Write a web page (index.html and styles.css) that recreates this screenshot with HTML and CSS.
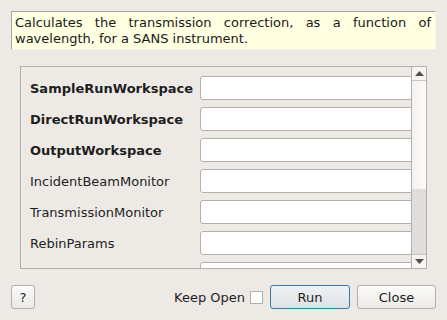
FILE: index.html
```html
<!DOCTYPE html>
<html>
<head>
<meta charset="utf-8">
<link rel="stylesheet" href="styles.css">
</head>
<body>
<div class="dialog">
  <div class="desc">Calculates the transmission correction, as a function of wavelength, for a SANS instrument.</div>
  <div class="panel">
    <div class="content">
      <div class="grid">
        <label class="lbl bold">SampleRunWorkspace</label><div class="field"></div>
        <label class="lbl bold">DirectRunWorkspace</label><div class="field"></div>
        <label class="lbl bold">OutputWorkspace</label><div class="field"></div>
        <label class="lbl">IncidentBeamMonitor</label><div class="field"></div>
        <label class="lbl">TransmissionMonitor</label><div class="field"></div>
        <label class="lbl">RebinParams</label><div class="field"></div>
        <span class="lbl"></span><div class="field"></div>
      </div>
    </div>
    <div class="scrollbar">
      <div class="sb-btn up"><svg width="9" height="5" viewBox="0 0 9 5"><polygon points="0,5 9,5 4.5,0" fill="#505050"/></svg></div>
      <div class="sb-thumb"></div>
      <div class="sb-track"></div>
      <div class="sb-btn down"><svg width="9" height="5" viewBox="0 0 9 5"><polygon points="0,0 9,0 4.5,5" fill="#505050"/></svg></div>
    </div>
  </div>
  <div class="buttons">
    <button class="btn help">?</button>
    <div class="spacer"></div>
    <span class="keep">Keep Open</span>
    <span class="check"></span>
    <button class="btn run">Run</button>
    <button class="btn close">Close</button>
  </div>
</div>
</body>
</html>
```
FILE: styles.css
```css
html, body {
  margin: 0;
  padding: 0;
  background: #edeae6;
}
body {
  font-family: "DejaVu Sans", sans-serif;
  font-size: 13px;
  color: #1e1e1e;
}
.dialog {
  width: 447px;
  height: 320px;
  padding: 11px 11px 0 11px;
  box-sizing: border-box;
  display: flex;
  flex-direction: column;
}
.desc {
  width: 425px;
  height: 39px;
  box-sizing: border-box;
  background: #ffffe1;
  border-top: 1px solid #a8a49f;
  border-left: 1px solid #a8a49f;
  border-right: 1px solid #f4f2ef;
  border-bottom: 1px solid #f4f2ef;
  padding: 3px 4px 0 3px;
  line-height: 16px;
  text-align: justify;
  color: #1a1a1a;
}
.panel {
  margin: 16px 0 0 9px;
  width: 407px;
  height: 203px;
  box-sizing: border-box;
  border: 1px solid #b3afaa;
  display: flex;
}
.content {
  width: 391px;
  overflow: hidden;
  padding: 9px 0 0 9px;
  box-sizing: border-box;
}
.grid {
  display: grid;
  grid-template-columns: 170px 240px;
  row-gap: 7px;
  align-items: center;
}
.lbl {
  color: #1e1e1e;
  white-space: nowrap;
}
.lbl.bold {
  font-weight: bold;
}
.field {
  height: 24px;
  box-sizing: border-box;
  background: #fff;
  border: 1px solid #b4b0ab;
  border-radius: 3px;
}
.scrollbar {
  width: 14px;
  border-left: 1px solid #b3afaa;
  display: flex;
  flex-direction: column;
}
.sb-btn {
  height: 14px;
  background: #f6f5f3;
  display: flex;
  align-items: center;
  justify-content: center;
  box-sizing: border-box;
}
.sb-btn.up {
  border-bottom: 1px solid #c9c6c2;
}
.sb-btn.down {
  border-top: 1px solid #c9c6c2;
}
.sb-thumb {
  height: 108px;
  background: linear-gradient(to right, #f3f2f0, #fbfbfa);
}
.sb-track {
  flex: 1;
  background: #e0dedb;
}
.buttons {
  margin-top: 16px;
  height: 24px;
  display: flex;
  align-items: center;
}
.spacer {
  flex: 1;
}
.btn {
  height: 24px;
  box-sizing: border-box;
  font-family: "DejaVu Sans", sans-serif;
  font-size: 13px;
  color: #1e1e1e;
  border: 1px solid #b4b0ab;
  border-radius: 3px;
  background: linear-gradient(#fbfbfa, #ebe9e6);
  padding: 0;
}
.help {
  width: 24px;
}
.keep {
  margin-right: 5px;
}
.check {
  width: 13px;
  height: 13px;
  box-sizing: border-box;
  background: #fff;
  border: 1px solid #b4b0ab;
  margin-right: 7px;
}
.run {
  width: 80px;
  border-color: #3b7aa8;
  background: linear-gradient(#eef1f3, #dde2e6);
}
.close {
  width: 79px;
  margin-left: 7px;
}
```
